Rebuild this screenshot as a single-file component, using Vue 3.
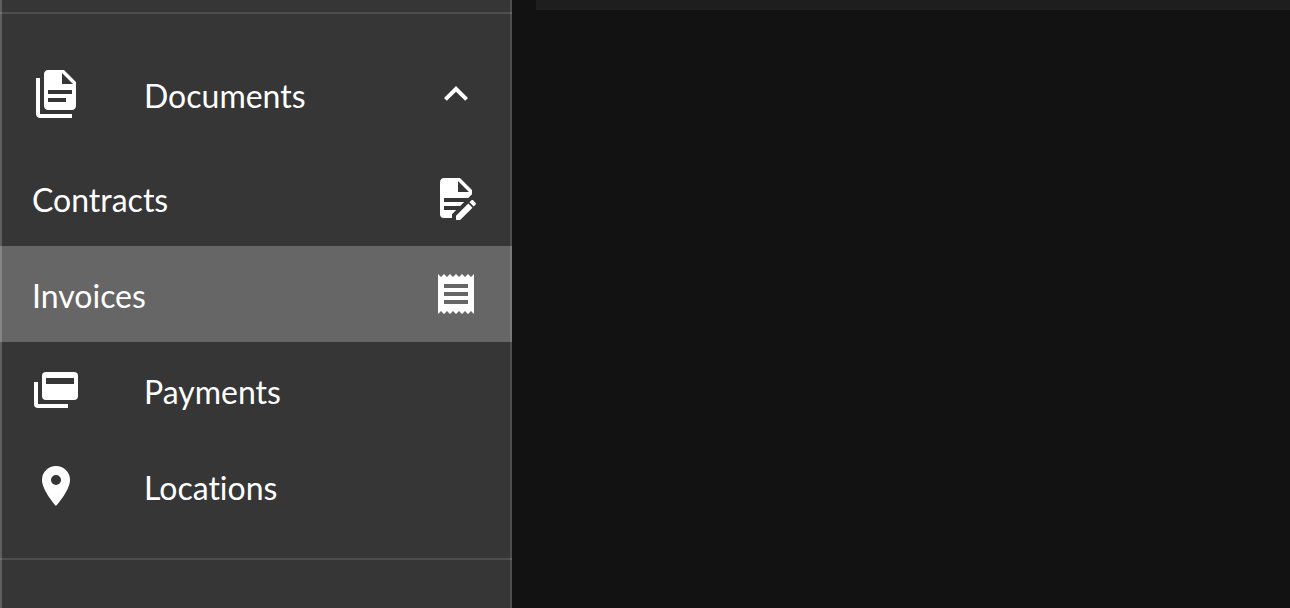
<script setup>
import { ref } from 'vue'

const open = ref(true)
const selected = ref('Invoices')

const icons = {
  documents: 'M16 0H8C6.9 0 6 .9 6 2V18C6 19.1 6.9 20 8 20H20C21.1 20 22 19.1 22 18V6L16 0M17 16H8V14H17V16M20 12H8V10H20V12M15 7V1.5L20.5 7H15M4 4V22H20V24H4C2.9 24 2 23.1 2 22V4H4Z',
  chevron: 'M7.41,15.41L12,10.83L16.59,15.41L18,14L12,8L6,14L7.41,15.41Z',
  payments: 'M21 3H7A2 2 0 0 0 5 5V15A2 2 0 0 0 7 17H21A2 2 0 0 0 23 15V5A2 2 0 0 0 21 3M21 9H7V6H21V9M3 8V19H18V21H3A2 2 0 0 1 1 19V8H3Z',
  locations: 'M12,11.5A2.5,2.5 0 0,1 9.5,9A2.5,2.5 0 0,1 12,6.5A2.5,2.5 0 0,1 14.5,9A2.5,2.5 0 0,1 12,11.5M12,2A7,7 0 0,0 5,9C5,14.25 12,22 12,22C12,22 19,14.25 19,9A7,7 0 0,0 12,2Z',
}

const children = [
  { label: 'Contracts', icon: 'M6,2C4.89,2 4,2.9 4,4V20A2,2 0 0,0 6,22H10V20.09L12.09,18H6V16H14.09L16.09,14H6V12H18.09L20,10.09V8L14,2H6M13,3.5L18.5,9H13V3.5M20.15,13C20,13 19.86,13.05 19.75,13.16L18.73,14.18L20.82,16.26L21.84,15.25C22.05,15.03 22.05,14.67 21.84,14.46L20.54,13.16C20.43,13.05 20.29,13 20.15,13M18.14,14.77L12,20.92V23H14.08L20.23,16.85L18.14,14.77Z' },
  { label: 'Invoices', icon: 'M3,22L4.5,20.5L6,22L7.5,20.5L9,22L10.5,20.5L12,22L13.5,20.5L15,22L16.5,20.5L18,22L19.5,20.5L21,22V2L19.5,3.5L18,2L16.5,3.5L15,2L13.5,3.5L12,2L10.5,3.5L9,2L7.5,3.5L6,2L4.5,3.5L3,2M18,9H6V7H18M18,13H6V11H18M18,17H6V15H18V17Z' },
]

const links = [
  { label: 'Payments', icon: icons.payments },
  { label: 'Locations', icon: icons.locations },
]
</script>

<template>
  <div class="app">
    <nav class="drawer">
      <hr class="divider" />
      <div class="list">
        <button class="row group" type="button" :aria-expanded="open" @click="open = !open">
          <svg class="icon" viewBox="0 0 24 24" aria-hidden="true"><path :d="icons.documents" /></svg>
          <span class="label indented">Documents</span>
          <svg class="icon" :class="{ closed: !open }" viewBox="0 0 24 24" aria-hidden="true"><path :d="icons.chevron" /></svg>
        </button>
        <template v-if="open">
          <a
            v-for="item in children"
            :key="item.label"
            class="row"
            :class="{ active: selected === item.label }"
            :href="'#' + item.label.toLowerCase()"
            @click="selected = item.label"
          >
            <span class="label">{{ item.label }}</span>
            <svg class="icon" viewBox="0 0 24 24" aria-hidden="true"><path :d="item.icon" /></svg>
          </a>
        </template>
        <a
          v-for="item in links"
          :key="item.label"
          class="row"
          :class="{ active: selected === item.label }"
          :href="'#' + item.label.toLowerCase()"
          @click="selected = item.label"
        >
          <svg class="icon" viewBox="0 0 24 24" aria-hidden="true"><path :d="item.icon" /></svg>
          <span class="label indented">{{ item.label }}</span>
        </a>
      </div>
      <hr class="divider" />
    </nav>
    <main class="content">
      <div class="panel"></div>
    </main>
  </div>
</template>

<style>
body {
  background: #121212;
}
</style>

<style scoped>
.app {
  display: flex;
  min-height: 100vh;
  background: #121212;
  color: #fff;
  font-family: Lato, "Liberation Sans", sans-serif;
  font-size: 32px;
  line-height: 40px;
}

.drawer {
  position: relative;
  box-sizing: border-box;
  flex: 0 0 512px;
  padding-top: 12px;
  background: #363636;
}

/* Translucent edges lie over the rows so the active row shows through. */
.drawer::after {
  content: "";
  position: absolute;
  inset: 0;
  border-left: 2px solid rgba(255, 255, 255, 0.2);
  border-right: 2px solid rgba(255, 255, 255, 0.12);
  pointer-events: none;
}

.divider {
  height: 2px;
  margin: 0;
  border: 0;
  background: rgba(255, 255, 255, 0.12);
}

.list {
  padding: 24px 0;
}

.row {
  display: flex;
  align-items: center;
  box-sizing: border-box;
  width: 100%;
  height: 96px;
  padding: 0 32px;
  border: 0;
  background: none;
  color: inherit;
  font: inherit;
  font-variant-ligatures: none;
  text-align: left;
  text-decoration: none;
  cursor: pointer;
}

.group {
  height: 112px;
}

.active {
  background: #666;
}

.label {
  flex: 1;
  padding-top: 4px;
}

.indented {
  padding-left: 64px;
}

.icon {
  flex: none;
  width: 48px;
  height: 48px;
  fill: currentColor;
}

.closed {
  transform: rotate(180deg);
}

.content {
  flex: 1;
  padding-left: 24px;
}

.panel {
  height: 10px;
  background: #1e1e1e;
}
</style>
